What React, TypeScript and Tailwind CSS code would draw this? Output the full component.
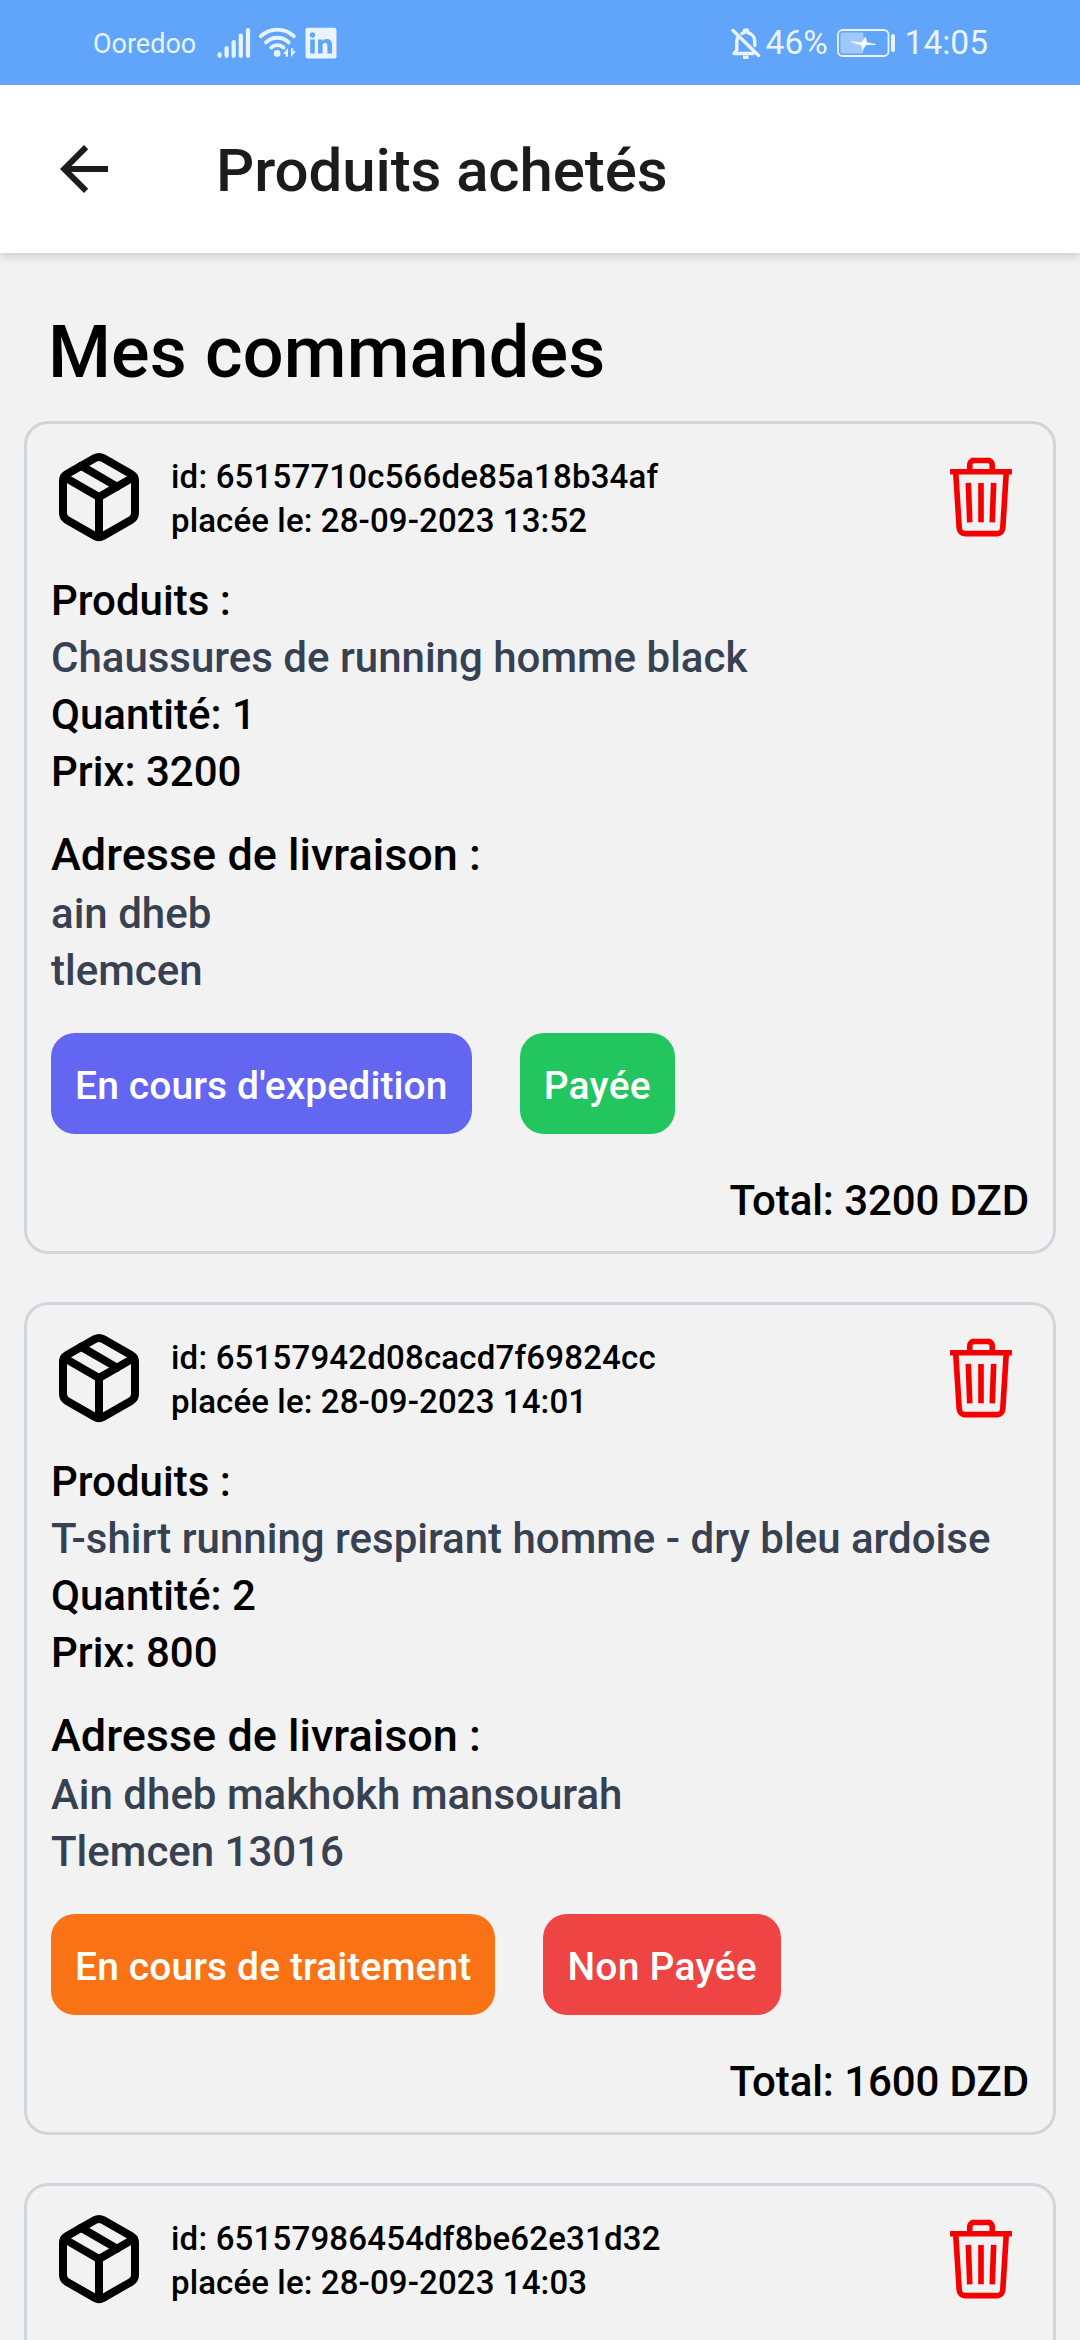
import React from "react";

type Details = {
  product: string;
  quantity: number;
  price: number;
  address: string[];
  status: string;
  statusColor: string;
  payment: string;
  paymentColor: string;
  total: number;
};

type Order = { id: string; date: string; details?: Details };

const orders: Order[] = [
  {
    id: "65157710c566de85a18b34af",
    date: "28-09-2023 13:52",
    details: {
      product: "Chaussures de running homme black",
      quantity: 1,
      price: 3200,
      address: ["ain dheb", "tlemcen"],
      status: "En cours d'expedition",
      statusColor: "bg-[#6366f1]",
      payment: "Payée",
      paymentColor: "bg-[#22c55e]",
      total: 3200,
    },
  },
  {
    id: "65157942d08cacd7f69824cc",
    date: "28-09-2023 14:01",
    details: {
      product: "T-shirt running respirant homme - dry bleu ardoise",
      quantity: 2,
      price: 800,
      address: ["Ain dheb makhokh mansourah", "Tlemcen 13016"],
      status: "En cours de traitement",
      statusColor: "bg-[#f97316]",
      payment: "Non Payée",
      paymentColor: "bg-[#ef4444]",
      total: 1600,
    },
  },
  {
    id: "65157986454df8be62e31d32",
    date: "28-09-2023 14:03",
  },
];

function PackageIcon() {
  return (
    <svg className="size-24 shrink-0" viewBox="0 0 24 24" fill="none" stroke="#000" strokeWidth="2" strokeLinecap="round" strokeLinejoin="round">
      <path d="M16.5 9.4l-9-5.19" />
      <path d="M21 16V8a2 2 0 0 0-1-1.73l-7-4a2 2 0 0 0-2 0l-7 4A2 2 0 0 0 3 8v8a2 2 0 0 0 1 1.73l7 4a2 2 0 0 0 2 0l7-4A2 2 0 0 0 21 16z" />
      <path d="M3.27 6.96L12 12.01l8.73-5.05M12 22.08V12" />
    </svg>
  );
}

function TrashIcon() {
  return (
    <svg className="size-[90px] shrink-0" viewBox="0 0 512 512" fill="none" stroke="#f50000" strokeWidth="32">
      <path d="M112 112l20 320c.95 18.49 14.4 32 32 32h184c17.67 0 30.87-13.51 32-32l20-320" />
      <path d="M80 112h352" />
      <path d="M192 112V72a23.93 23.93 0 0 1 24-24h80a23.93 23.93 0 0 1 24 24v40M256 176v224M184 176l8 224M328 176l-8 224" />
    </svg>
  );
}

function StatusBar() {
  return (
    <div className="relative z-10 flex h-[85px] shrink-0 items-center bg-[#60a5fa] pr-[92px] pl-[93px] text-[#eaf4ff]">
      <span className="mt-[2px] w-[124px] text-[27px] leading-8 whitespace-nowrap">Ooredoo</span>
      <svg className="h-8 w-[34px]" viewBox="0 0 34 32" stroke="currentColor" strokeWidth="4.2" strokeLinecap="round">
        <path d="M2.6 27.4v1.4M9.6 21v7.8M16.7 15v13.8M23.8 8.5v20.3M31 3v25.8" />
      </svg>
      <svg className="ml-[8px] h-8 w-[37px]" viewBox="0 0 37 32" fill="none" stroke="currentColor" strokeWidth="3.8" strokeLinecap="round">
        <path d="M1.9 9.2C11 .4 25.8.4 34.8 9.2" />
        <path d="M7 15.4c6.4-6.2 16.2-6.2 22.7 0" />
        <path d="M12.2 20.6c3.4-3.2 8.9-3.2 12.3 0" />
        <circle cx="18.2" cy="26.4" r="3.4" fill="currentColor" stroke="none" />
        <path d="M24 27l5-6v8.700h-2.200V27zM37 24.200L32 30v-8.700h2.200v2.900z" fill="currentColor" stroke="none" />
      </svg>
      <svg className="ml-[9px] h-8 w-8" viewBox="0 0 32 32">
        <rect x=".5" y=".8" width="31" height="30.6" rx="2" fill="currentColor" />
        <g fill="#60a5fa">
          <circle cx="7.5" cy="8" r="2.7" />
          <path d="M5.200 12.500h4.600v14H5.200zM13 12.500h4.400v2c1-1.700 2.500-2.400 4.400-2.400 4 0 5.200 2.700 5.200 6.400v8h-4.600v-7.200c0-1.900-.4-3.500-2.300-3.500-2 0-2.500 1.600-2.500 3.400v7.300H13z" />
        </g>
      </svg>
      <div className="ml-auto flex items-center">
        <svg className="h-8 w-[30px]" viewBox="0 0 30 32" fill="none" stroke="currentColor" strokeWidth="3.4" strokeLinejoin="round" strokeLinecap="round">
          <path d="M2 3.500l25.500 25M22 26.500H3l2.800-3.500v-8.500c0-2 .5-3.700 1.400-5.200M11 6.500c1-.5 1.700-.7 2.500-.9V4c0-1.500 3.200-1.500 3.200 0v1.600c4.400 1 7.100 4.600 7.100 8.900v4" />
          <path d="M12 30.300h5.500" strokeLinecap="butt" />
        </svg>
        <span className="mt-px ml-[5px] w-[71px] text-[33.5px] leading-[40px] whitespace-nowrap">46%</span>
        <svg className="h-[30px] w-[59px]" viewBox="0 0 59 30">
          <rect x="1" y="2" width="50.5" height="26" rx="4.5" fill="none" stroke="currentColor" strokeWidth="1.8" />
          <rect x="3.5" y="4.5" width="23" height="21" rx="2" fill="#fff" opacity=".4" />
          <path d="M14 13.500l10.500 1.300 4-5.800 1.200 5.500L39 16.500l-10 .3-3.500 5-.8-4.500z" fill="#fff" stroke="#fff" strokeWidth=".6" />
          <path d="M56 8v14" stroke="currentColor" strokeWidth="4" strokeLinecap="round" />
        </svg>
        <span className="mt-px ml-[9px] text-[33.5px] leading-[40px] whitespace-nowrap">14:05</span>
      </div>
    </div>
  );
}

function OrderDetails({ details }: { details: Details }) {
  return (
    <>
      <div className="mt-[27px]">
        <p>Produits :</p>
        <p className="whitespace-nowrap text-[#374151]">{details.product}</p>
        <p>Quantité: {details.quantity}</p>
        <p>Prix: {details.price}</p>
      </div>
      <div className="mt-[25px]">
        <p className="text-[45px] leading-[60px]">Adresse de livraison :</p>
        {details.address.map((line) => (
          <p key={line} className="text-[#374151]">{line}</p>
        ))}
      </div>
      <div className="mt-[34px] flex gap-12 text-[39px] leading-[53px] tracking-[0.1px] text-white">
        <span className={`rounded-3xl px-6 pt-[27px] pb-[21px] ${details.statusColor}`}>{details.status}</span>
        <span className={`rounded-3xl px-6 pt-[27px] pb-[21px] tracking-[0.25px] ${details.paymentColor}`}>{details.payment}</span>
      </div>
      <p className="mt-[38px] text-right tracking-[-0.1px]">Total: {details.total} DZD</p>
    </>
  );
}

function OrderCard({ order }: { order: Order }) {
  return (
    <section className="h-[833px] shrink-0 rounded-3xl border-3 border-[#d1d5db] p-6 text-[42px] leading-[57px] text-black">
      <div className="mt-px flex h-24 items-center">
        <PackageIcon />
        <div className="mt-[4px] ml-6 text-[33px] leading-[44px]">
          <p className="tracking-[0.19px]">id: {order.id}</p>
          <p className="tracking-[0.12px]">placée le: {order.date}</p>
        </div>
        <div className="mr-[3px] ml-auto">
          <TrashIcon />
        </div>
      </div>
      {order.details && <OrderDetails details={order.details} />}
    </section>
  );
}

export default function App() {
  return (
    <div className="flex h-[2340px] w-[1080px] flex-col overflow-hidden bg-[#f2f2f2] font-['Roboto',sans-serif]">
      <StatusBar />
      <header className="relative flex h-[168px] shrink-0 items-center bg-white shadow-[0_2px_10px_rgba(0,0,0,0.2)]">
        <svg className="ml-12 size-[72px]" viewBox="0 0 24 24" fill="#1c1c1e">
          <path d="M20 11H7.830l5.590-5.590L12 4l-8 8 8 8 1.410-1.410L7.830 13H20v-2z" />
        </svg>
        <h1 className="mt-[4px] ml-24 text-[60px] leading-[80px] font-medium tracking-[-0.1px] text-[#1c1c1e]">Produits achetés</h1>
      </header>
      <main className="flex min-h-0 flex-1 flex-col px-6 font-medium">
        <h2 className="mt-[52px] ml-6 h-[116px] shrink-0 text-[72px] leading-[96px] tracking-[0.15px] text-black">Mes commandes</h2>
        <div className="flex flex-col gap-12">
          {orders.map((order) => (
            <OrderCard key={order.id} order={order} />
          ))}
        </div>
      </main>
    </div>
  );
}
